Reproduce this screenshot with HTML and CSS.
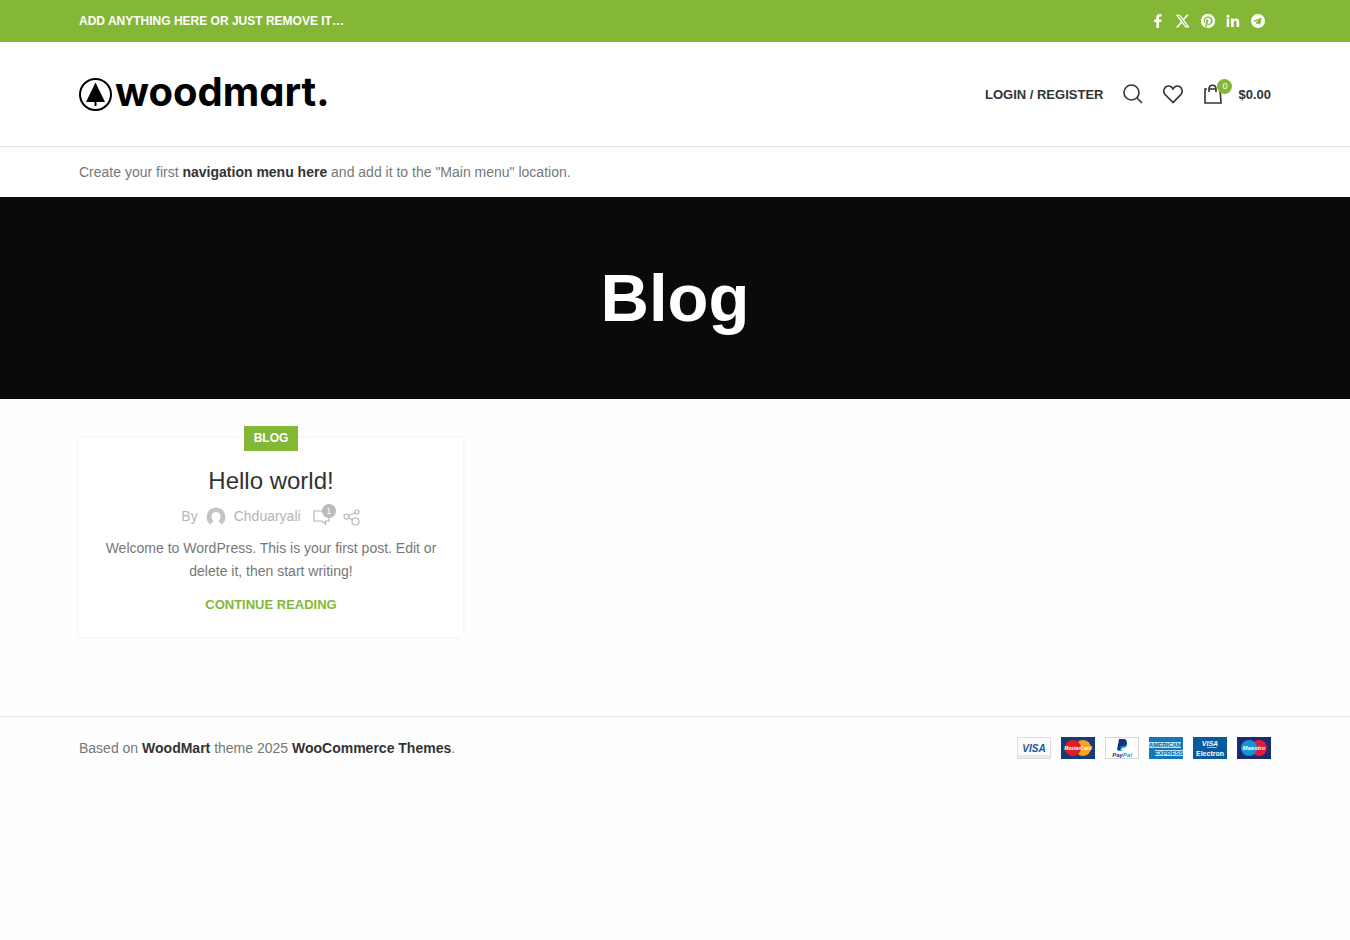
FILE: index.html
```html
<!DOCTYPE html>
<html lang="en">
<head>
<meta charset="utf-8">
<meta name="viewport" content="width=device-width, initial-scale=1">
<title>Blog</title>
<link rel="stylesheet" href="styles.css">
</head>
<body>
<header>
  <div class="topbar">
    <div class="container row">
      <strong class="topbar-text">ADD ANYTHING HERE OR JUST REMOVE IT…</strong>
      <nav class="social" aria-label="Social links">
        <a href="#" aria-label="Facebook"><svg width="14" height="14" viewBox="0 0 14 14"><path fill="currentColor" d="M5.300 14V8H3V5.400h2.300V3.600C5.300 1.300 6.600 0 8.700 0c1 0 1.900.1 1.900.1v2.300H9.400C8.300 2.400 8 3 8 3.700v1.700h2.500L10.100 8H8v6z"/></svg></a>
        <a href="#" aria-label="X"><svg width="14" height="14" viewBox="0 0 24 24"><path fill="currentColor" d="M18.300 1.200H22l-8.100 9.200L23.400 23H16l-5.800-7.600L3.500 23H-.2l8.600-9.900L-.6 1.200H7l5.300 7zM17 20.800h2L5.800 3.200H3.600z"/></svg></a>
        <a href="#" aria-label="Pinterest"><svg width="14" height="14" viewBox="0 0 24 24"><path fill="currentColor" d="M12 0a12 12 0 0 0-4.400 23.200c-.1-1-.2-2.400 0-3.500L9 13.800s-.3-.7-.3-1.800c0-1.700 1-2.900 2.200-2.900 1 0 1.500.8 1.500 1.700 0 1-.7 2.600-1 4-.3 1.200.6 2.200 1.800 2.200 2.100 0 3.800-2.300 3.800-5.500 0-2.900-2.100-4.900-5-4.900-3.500 0-5.500 2.600-5.500 5.300 0 1 .4 2.200.9 2.800l-.4 1.500c-1.600-.7-2.500-2.900-2.500-4.700 0-3.800 2.800-7.300 8-7.300 4.200 0 7.400 3 7.400 7 0 4.100-2.600 7.500-6.300 7.500-1.200 0-2.400-.6-2.800-1.400l-.8 2.900c-.3 1-1 2.400-1.500 3.200A12 12 0 1 0 12 0z"/></svg></a>
        <a href="#" aria-label="LinkedIn"><svg width="14" height="14" viewBox="0 0 14 14"><path fill="currentColor" d="M.6 4.600h2.700V13H.6zM2 .6a1.600 1.600 0 1 1 0 3.200A1.600 1.600 0 0 1 2 .6zM5 4.600h2.600v1.200c.5-.9 1.400-1.400 2.600-1.400 2.400 0 3 1.500 3 3.700V13h-2.700V8.700c0-1.100-.1-2-1.300-2s-1.500.9-1.500 2V13H5z"/></svg></a>
        <a href="#" aria-label="Telegram"><svg width="14" height="14" viewBox="0 0 24 24"><path fill="currentColor" fill-rule="evenodd" d="M12 0a12 12 0 1 0 0 24 12 12 0 0 0 0-24zm6 7.600-2.100 10c-.2.700-.6.900-1.200.6l-3.200-2.500-1.600 1.700c-.4.400-1.100.2-1.100-.4l.1-2.800 6-5.500-7.500 4.700-3-1c-.7-.2-.7-.7.100-1l12.500-4.800c.7-.2 1.200.2 1 1z"/></svg></a>
      </nav>
    </div>
  </div>

  <div class="masthead">
    <div class="container row">
      <a class="logo" href="#">
        <svg width="34" height="34" viewBox="0 0 34 34" aria-hidden="true"><circle cx="16.500" cy="16.500" r="15.500" fill="none" stroke="#000" stroke-width="2"/><path d="M16.500 4.500l9.500 19.500h-8.500v4h-2v-4H7z"/></svg>
        <span class="logo-name">woodmart.</span>
      </a>
      <div class="tools">
        <a class="login" href="#">LOGIN / REGISTER</a>
        <a class="tool" href="#" aria-label="Search"><svg width="20" height="20" viewBox="0 0 20 20"><circle cx="8.500" cy="8.500" r="7.500"/><path d="M14 14l5 5"/></svg></a>
        <a class="tool" href="#" aria-label="Wishlist"><svg width="20" height="20" viewBox="0 0 20 20"><path d="M10 18.500L2.200 10.600C-.2 8 .7 4 3.400 2.500 6 1.200 8.700 2.300 10 5c1.300-2.700 4-3.800 6.600-2.500 2.700 1.500 3.600 5.500 1.200 8.100z"/></svg></a>
        <a class="cart" href="#">
          <span class="cart-icon"><svg width="20" height="20" viewBox="0 0 20 20"><path d="M4 5H2v14h16L17 5h-2M6 5h7M6 8V5c0-5 7-5 7 0v3"/></svg><span class="badge">0</span></span>
          <span>$0.00</span>
        </a>
      </div>
    </div>
  </div>

  <div class="menu-hint">
    <div class="container">Create your first <a href="#">navigation menu here</a> and add it to the "Main menu" location.</div>
  </div>
</header>

<section class="page-title"><h1>Blog</h1></section>

<main class="container posts">
  <article class="post">
    <a class="category" href="#">BLOG</a>
    <h2><a href="#">Hello world!</a></h2>
    <div class="meta">
      <span>By</span>
      <svg width="20" height="20" viewBox="0 0 20 20" aria-hidden="true"><circle cx="10" cy="10" r="9.500" fill="#c4c4c4"/><path fill="#fff" d="M10 5c3 0 4.500 2 4.500 4.500 0 2-.6 3.400-1.600 4.300l.3 1.400 2.500 1.300L13 20H7l-2.700-3.500 2.500-1.300.3-1.400c-1-.9-1.600-2.300-1.600-4.300C5.500 7 7 5 10 5z"/></svg>
      <a class="author" href="#">Chduaryali</a>
      <a class="comments" href="#" aria-label="1 comment"><svg width="18" height="18" viewBox="0 0 18 18"><path d="M1 3h15v10h-3.500v3L9 13H1z"/></svg><span class="count">1</span></a>
      <a class="share" href="#" aria-label="Share"><svg width="18" height="18" viewBox="0 0 18 18"><circle cx="3.500" cy="8.500" r="2.500"/><circle cx="14" cy="4" r="2"/><circle cx="12.500" cy="13.500" r="3.500"/><path d="M6 7.500l6-2.700M5.500 10l4 2"/></svg></a>
    </div>
    <p>Welcome to WordPress. This is your first post. Edit or delete it, then start writing!</p>
    <a class="more" href="#">CONTINUE READING</a>
  </article>
</main>

<footer>
  <div class="container row">
    <div>Based on <a href="#">WoodMart</a> theme 2025 <a href="#">WooCommerce Themes</a>.</div>
    <div class="payments">
      <svg width="34" height="22" viewBox="0 0 34 22" role="img" aria-label="Visa"><path fill="#fafafa" stroke="#ddd" d="M.5.500h33v21H.5z"/><path fill="#e9e9e9" d="M1 18h32v3H1z"/><text class="card-text" x="17" y="15" font-size="10" fill="#17569b">VISA</text><path fill="#e8a52c" d="M5 7h3l1 3z"/></svg>
      <svg width="34" height="22" viewBox="0 0 34 22" role="img" aria-label="MasterCard"><path fill="#173a78" d="M0 0h34v22H0z"/><circle cx="22" cy="11" r="8" fill="#f9a51a"/><circle cx="12" cy="11" r="8" fill="#e51b24"/><text class="card-text" x="17" y="13" font-size="5" fill="#fff">MasterCard</text></svg>
      <svg width="34" height="22" viewBox="0 0 34 22" role="img" aria-label="PayPal"><path fill="#fff" stroke="#d5d5d5" d="M.5.500h33v21H.5z"/><path fill="#179bd7" d="M15 5h6c2 1 2 6-3 6h-1l-.6 3H13z"/><path fill="#1c3278" d="M14 2h5c4 0 4 7-1 7h-2l-1 4h-3z"/><text class="card-text" x="17" y="20" font-size="6"><tspan fill="#1c3278">Pay</tspan><tspan fill="#179bd7">Pal</tspan></text></svg>
      <svg width="34" height="22" viewBox="0 0 34 22" role="img" aria-label="American Express"><path fill="#1478b8" d="M0 0h34v22H0z"/><path fill="#b9def2" d="M0 5h32v6H0zM6 13h28v6H6z"/><text class="card-text upright" x="16" y="10" font-size="6" fill="#0a65a5">AMERICAN</text><text class="card-text upright" x="20" y="18" font-size="6" fill="#0a65a5">EXPRESS</text></svg>
      <svg width="34" height="22" viewBox="0 0 34 22" role="img" aria-label="Visa Electron"><path fill="#085a9c" d="M0 0h34v22H0z"/><text class="card-text" x="17" y="9" font-size="7" fill="#fff">VISA</text><path fill="#e8b53c" d="M14 10h10v1H14z"/><text class="card-text upright" x="17" y="19" font-size="7" fill="#fff">Electron</text></svg>
      <svg width="34" height="22" viewBox="0 0 34 22" role="img" aria-label="Maestro"><path fill="#1b2d70" d="M0 0h34v22H0z"/><circle cx="22" cy="11" r="8" fill="#e51937"/><circle cx="12" cy="11" r="8" fill="#1595d3"/><text class="card-text" x="17" y="13" font-size="6" fill="#fff">Maestro</text></svg>
    </div>
  </div>
</footer>
</body>
</html>
```
FILE: styles.css
```css
* { box-sizing: border-box; }
body {
  margin: 0;
  background: #fefefe;
  color: #777;
  font: 14px/23px "Liberation Sans", Arial, sans-serif;
}
a { color: #333; text-decoration: none; }
svg { display: block; flex: none; }
.container { max-width: 1222px; margin: 0 auto; padding: 0 15px; }
.row { display: flex; align-items: center; justify-content: space-between; }

.topbar { background: #83b735; color: #fff; padding: 9px 0; }
.topbar-text { font-size: 12px; line-height: 24px; }
.social { display: flex; gap: 11px; padding-right: 6px; }
.social a { color: #fff; }

.masthead { background: #fff; border-bottom: 1px solid #e3e3e3; padding: 26px 0; }
.logo { display: flex; align-items: center; gap: 2px; color: #000; }
.logo-name { font: 700 40px/48px Inter, sans-serif; font-feature-settings: "cv11"; padding-bottom: 4px; }
.logo svg { margin-top: 2px; }
.tools { display: flex; align-items: center; gap: 20px; font-size: 13px; font-weight: 700; }
.tool svg, .cart svg, .comments svg, .share svg { fill: none; stroke: currentColor; stroke-width: 1.6; }
.cart { display: flex; align-items: center; gap: 15px; }
.cart-icon { position: relative; }
.badge {
  position: absolute;
  top: -5px;
  right: -9px;
  width: 15px;
  border-radius: 50%;
  background: #83b735;
  color: #fff;
  font-size: 9px;
  font-weight: 400;
  line-height: 15px;
  text-align: center;
}

.menu-hint { background: #fff; padding: 14px 0 13px; }
.menu-hint a, footer a { font-weight: 700; }

.page-title { background: #0a0a0a; padding: 60px 15px; text-align: center; }
h1 { margin: 0; color: #fff; font-size: 67px; line-height: 82px; }

.posts { display: grid; grid-template-columns: repeat(auto-fill, minmax(340px, 1fr)); gap: 20px; padding-top: 39px; padding-bottom: 79px; }
.post {
  display: flex;
  flex-direction: column;
  align-items: center;
  padding: 0 20px 21px;
  background: #fff;
  box-shadow: 0 0 4px rgba(0, 0, 0, .07);
  text-align: center;
}
.category {
  margin-top: -12px;
  padding: 0 10px;
  background: #83b735;
  color: #fff;
  font-size: 12px;
  font-weight: 700;
  line-height: 25px;
}
h2 { margin: 14px 0 8px; font-size: 24px; font-weight: 400; line-height: 32px; }
.meta { display: flex; align-items: center; gap: 8px; color: #b5b5b5; }
.meta a { color: #b5b5b5; }
.comments { position: relative; margin-left: 4px; }
.comments svg, .share svg { stroke-width: 1.2; }
.share { margin-left: 4px; }
.count {
  position: absolute;
  top: -4px;
  right: -5px;
  width: 14px;
  border-radius: 50%;
  background: #bbb;
  color: #fff;
  font-size: 9px;
  line-height: 14px;
  text-align: center;
}
.post p { margin: 9px 0 10px; }
.more { color: #83b735; font-size: 13px; font-weight: 700; }

footer { border-top: 1px solid #e3e3e3; padding: 20px 0; }
footer .row { align-items: flex-start; }
.payments { display: flex; gap: 10px; }
.card-text { font-family: "Liberation Sans", Arial, sans-serif; font-weight: 700; font-style: italic; text-anchor: middle; }
.upright { font-style: normal; }
```
